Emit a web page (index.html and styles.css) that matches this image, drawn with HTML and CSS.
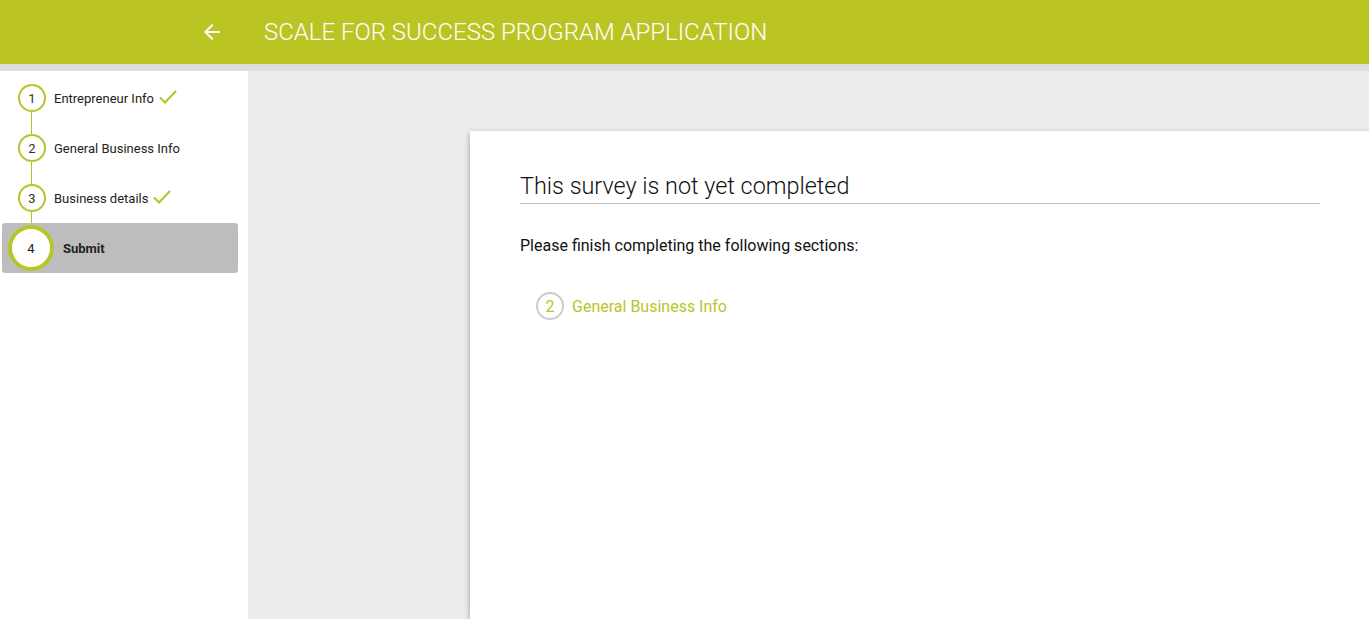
FILE: index.html
```html
<!DOCTYPE html>
<html>
<head>
<meta charset="utf-8">
<link rel="stylesheet" href="styles.css">
</head>
<body>
<header class="topbar">
  <span class="back">
    <svg width="24" height="24" viewBox="0 0 24 24"><path d="M20 11H7.83l5.59-5.59L12 4l-8 8 8 8 1.41-1.41L7.83 13H20v-2z" fill="#fff"/></svg>
  </span>
  <h1 class="title">SCALE FOR SUCCESS PROGRAM APPLICATION</h1>
</header>
<div class="strip"></div>
<div class="layout">
  <nav class="sidebar">
    <div class="step">
      <span class="num">1</span><span class="label">Entrepreneur Info</span>
      <svg class="check" width="20" height="16" viewBox="0 0 20 16"><path d="M2 8.5l5 5L18 2" fill="none" stroke="#b5c32a" stroke-width="2"/></svg>
    </div>
    <div class="step">
      <span class="num">2</span><span class="label">General Business Info</span>
    </div>
    <div class="step">
      <span class="num">3</span><span class="label">Business details</span>
      <svg class="check" width="20" height="16" viewBox="0 0 20 16"><path d="M2 8.5l5 5L18 2" fill="none" stroke="#b5c32a" stroke-width="2"/></svg>
    </div>
    <div class="step active">
      <span class="num">4</span><span class="label">Submit</span>
    </div>
  </nav>
  <main class="main">
    <section class="card">
      <h2 class="heading">This survey is not yet completed</h2>
      <p class="intro">Please finish completing the following sections:</p>
      <div class="todo">
        <span class="todo-num">2</span><span class="todo-label">General Business Info</span>
      </div>
    </section>
  </main>
</div>
</body>
</html>
```
FILE: styles.css
```css
* { box-sizing: border-box; }
html, body { margin: 0; padding: 0; height: 100%; overflow: hidden; }
body {
  font-family: Roboto, "Liberation Sans", sans-serif;
  background: #ededed;
  display: flex;
  flex-direction: column;
}
.topbar {
  height: 64px;
  background: #bac524;
  display: flex;
  align-items: center;
  flex-shrink: 0;
}
.back {
  display: flex;
  margin-left: 200px;
  width: 24px;
  height: 24px;
}
.title {
  margin: 0 0 0 40px;
  font-size: 24px;
  font-weight: 300;
  color: #fff;
  letter-spacing: 0;
}
.strip {
  height: 7px;
  background: #dedede;
  flex-shrink: 0;
}
.layout {
  flex: 1;
  display: flex;
  min-height: 0;
}
.sidebar {
  width: 248px;
  background: #fff;
  flex-shrink: 0;
  padding: 2px 10px 0 2px;
  display: flex;
  flex-direction: column;
}
.step {
  position: relative;
  height: 50px;
  display: flex;
  align-items: center;
  font-size: 13px;
  color: #222;
}
.step::after {
  content: "";
  position: absolute;
  left: 29px;
  top: 39px;
  width: 1px;
  height: 22px;
  background: #b5c32a;
}
.step.active::after { display: none; }
.num {
  width: 28px;
  height: 28px;
  border: 2px solid #b8c52a;
  border-radius: 50%;
  display: flex;
  align-items: center;
  justify-content: center;
  margin-left: 16px;
  font-size: 13px;
  color: #333;
  background: #fff;
  position: relative;
  z-index: 1;
}
.label { margin-left: 8px; }
.check { margin-left: 4px; margin-top: -2px; }
.step.active {
  background: #bdbdbd;
  border-radius: 3px;
  height: 50px;
}
.step.active .num {
  width: 46px;
  height: 46px;
  border-width: 4px;
  margin-left: 6px;
  color: #222;
}
.step.active .label {
  margin-left: 9px;
  font-weight: 700;
}
.main {
  flex: 1;
  padding: 60px 0 0 222px;
  overflow: hidden;
  min-width: 0;
}
.card {
  width: 900px;
  height: 100%;
  background: #fff;
  box-shadow: 0 2px 6px rgba(0,0,0,0.35);
  padding: 40px 50px 0 50px;
}
.heading {
  margin: 0;
  font-size: 23.4px;
  font-weight: 300;
  color: #111;
  padding-bottom: 2px;
  border-bottom: 1px solid #bdbdbd;
  line-height: 30px;
}
.intro {
  margin: 32px 0 0 0;
  font-size: 16px;
  color: #111;
}
.todo {
  margin: 37px 0 0 16px;
  display: flex;
  align-items: center;
}
.todo-num {
  width: 28px;
  height: 28px;
  border: 2px solid #cccccc;
  border-radius: 50%;
  display: flex;
  align-items: center;
  justify-content: center;
  color: #b8c52a;
  font-size: 16px;
}
.todo-label {
  margin-left: 8px;
  color: #b8c52a;
  font-size: 16px;
}
```
